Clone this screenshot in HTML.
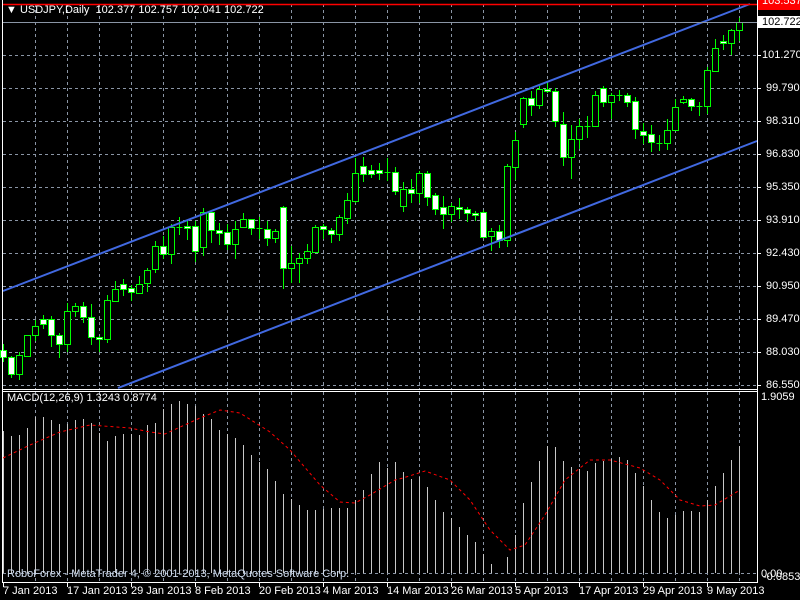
<!DOCTYPE html>
<html><head><meta charset="utf-8"><style>
html,body{margin:0;padding:0;background:#000;}
body{width:800px;height:600px;overflow:hidden;position:relative;font-family:"Liberation Sans",sans-serif;font-size:11px;color:#fff;}
svg{position:absolute;left:0;top:0;}
.t{position:absolute;white-space:nowrap;line-height:12px;}
</style></head><body>
<svg id="s" width="800" height="600" xmlns="http://www.w3.org/2000/svg"></svg>
<div class="t" style="left:6px;top:4px;">&#9660; USDJPY,Daily&nbsp; 102.377 102.757 102.041 102.722</div>
<div class="t" style="left:7px;top:568px;color:#d0ddf0;">RoboForex - MetaTrader 4, © 2001-2013, MetaQuotes Software Corp.</div>
<div class="t" style="left:7px;top:392px;">MACD(12,26,9) 1.3243 0.8774</div>
<div id="labels"></div>
<script>
var s=document.getElementById('s');var h='';
// grid
for(var x=35.5;x<757;x+=32){h+='<line x1="'+x+'" y1="4" x2="'+x+'" y2="389" stroke="#8a95a5" stroke-dasharray="3,3"/>';h+='<line x1="'+x+'" y1="392" x2="'+x+'" y2="582" stroke="#8a95a5" stroke-dasharray="3,3"/>';}
var gy=[55,88,121,154,187,220,253,286,319,352,385];
gy.forEach(function(y){h+='<line x1="3" y1="'+(y+.5)+'" x2="757" y2="'+(y+.5)+'" stroke="#8a95a5" stroke-dasharray="3,3"/><line x1="757" y1="'+(y+.5)+'" x2="761" y2="'+(y+.5)+'" stroke="#fff"/>';});
h+='<line x1="3" y1="573.5" x2="757" y2="573.5" stroke="#8a95a5" stroke-dasharray="3,3"/>';
// MACD bars
var mt=[431,436,435,428,417,417,420,424,424,420,419,423,433,441,436,434,434,435,425,423,409,404,401,404,406,414,419,430,434,438,445,455,462,469,481,494,499,505,510,510,509,508,508,508,500,490,474,462,468,462,
472,479,477,487,500,512,518,527,535,542,554,564,573,557,535,503,482,461,446,447,461,467,469,471,463,461,459,457,460,473,486,500,512,518,515,511,511,512,500,486,473,460,446];
mt.forEach(function(t,k){if(t<573)h+='<rect x="'+(3+8*k)+'" y="'+t+'" width="1" height="'+(573-t)+'" fill="#c8c8c8"/>';});
h+='<polyline fill="none" stroke="#ff0000" stroke-dasharray="3,3" points="3,458 30,445 60,432 90,425 130,428 150,432 165,434 200,418 220,410 240,413 270,432 290,450 320,485 340,502 355,503 370,495 395,480 403,478 425,471 450,480 470,500 490,530 510,550 525,545 545,515 565,480 590,460 610,460 640,468 660,480 680,500 700,506 715,505 740,490"/>';
// candles [type, bodyTop, bodyBot, wickTop, wickBot]
var c=[['D',350,357,344,362],['D',357,374,356,378],['U',355,374,352,380],['U',335,356,335,357],['U',326,335,320,341],['D',319,324,315,329],['D',319,335,316,347],['D',335,344,333,358],['U',311,344,303,352],['U',306,311,303,317],['D',306,317,302,323],['D',317,337,304,345],['D',337,339,336,352],['U',300,339,295,343],['U',289,301,281,302],['D',284,289,279,296],['D',288,292,285,301],['U',284,293,276,294],['U',270,283,268,292],['U',246,269,241,273],['D',246,254,236,259],['U',227,254,224,264],['X',227,228,217,235],['D',226,228,221,240],['D',226,251,221,262],['U',212,247,208,256],['D',212,230,212,243],['D',230,233,223,245],['D',232,244,224,250],['U',229,244,221,259],['U',219,227,213,227],['D',219,228,219,235],['X',228,229,217,239],['D',229,238,221,246],['U',231,238,229,243],['D',207,268,206,289],['U',263,268,246,283],['U',258,263,253,283],['U',251,258,244,264],['U',227,252,225,253],['D',226,229,224,239],['D',230,234,228,243],['U',217,234,215,241],['U',200,218,193,224],['U',173,201,158,203],['D',166,174,157,182],['D',170,174,165,178],['D',170,173,163,180],['X',172,173,158,181],['D',172,191,167,195],['U',189,206,182,212],['D',189,193,179,203],['U',173,193,171,203],['D',173,197,171,206],['D',195,209,193,215],['D',207,214,196,229],['U',206,214,203,222],['D',207,209,198,219],['D',209,213,207,222],['D',213,215,211,221],['D',212,237,210,238],['U',231,236,228,251],['D',231,240,225,248],['U',166,240,164,247],['U',140,167,132,180],['U',98,124,97,128],['D',98,105,91,116],['U',89,105,86,109],['D',89,91,83,93],['D',91,121,88,127],['D',124,157,112,166],['U',139,157,125,179],['U',126,139,119,149],['X',126,127,116,138],['U',95,126,91,126],['D',88,102,86,107],['U',95,102,93,119],['X',95,96,90,101],['D',95,102,93,107],['D',101,129,97,139],['D',131,135,123,144],['D',134,142,125,152],['X',143,144,135,151],['U',130,143,119,150],['U',107,130,99,130],['U',99,102,96,104],['D',99,106,98,111],['X',106,107,102,116],['U',70,106,67,114],['U',48,71,39,72],['D',41,43,35,50],['U',30,43,29,55],['U',22,30,18,41]];
c.forEach(function(d,k){var cx=3.5+8*k;
h+='<line x1="'+cx+'" y1="'+d[3]+'" x2="'+cx+'" y2="'+d[4]+'" stroke="#00ff00"/>';
if(d[0]=='X'){h+='<line x1="'+(cx-3)+'" y1="'+(d[1]+.5)+'" x2="'+(cx+3)+'" y2="'+(d[1]+.5)+'" stroke="#00ff00"/>';}
else{var bh=Math.max(2,d[2]-d[1]);h+='<rect x="'+(cx-3)+'" y="'+(d[1]+.5)+'" width="6" height="'+bh+'" fill="'+(d[0]=='D'?'#fff':'#000')+'" stroke="#00ff00"/>';}
});
// channel
h+='<line x1="3" y1="291" x2="750" y2="4" stroke="#4169e1" stroke-width="2"/>';
h+='<line x1="118" y1="388" x2="757" y2="141" stroke="#4169e1" stroke-width="2"/>';
// bid & red lines
h+='<line x1="3" y1="22.5" x2="757" y2="22.5" stroke="#8a95a5"/>';
h+='<line x1="3" y1="4.5" x2="757" y2="4.5" stroke="#ff0000" stroke-width="1.5"/>';
// borders
h+='<line x1="2.5" y1="0" x2="2.5" y2="583" stroke="#fff"/>';
h+='<line x1="757.5" y1="0" x2="757.5" y2="583" stroke="#fff"/>';
h+='<line x1="3" y1="389.5" x2="758" y2="389.5" stroke="#fff"/><line x1="3" y1="391.5" x2="758" y2="391.5" stroke="#fff"/>';
h+='<line x1="2" y1="582.5" x2="758" y2="582.5" stroke="#fff"/>';
for(var x=3.5;x<757;x+=64){h+='<line x1="'+x+'" y1="582" x2="'+x+'" y2="587" stroke="#fff"/>';}
h+='<rect x="758" y="0" width="42" height="10" fill="#ff0000"/>';
h+='<rect x="758" y="16" width="42" height="12" fill="#fff"/>';
s.innerHTML=h;
var L='';
var lab=[['101.270',55],['99.790',88],['98.310',121],['96.830',154],['95.350',187],['93.910',220],['92.430',253],['90.950',286],['89.470',319],['88.030',352],['86.550',385]];
lab.forEach(function(a){L+='<div class="t" style="left:'+(a[0].length>6?762:766)+'px;top:'+(a[1]-6)+'px;">'+a[0]+'</div>';});
L+='<div class="t" style="left:762px;top:-5px;color:#fff;">103.537</div>';
L+='<div class="t" style="left:762px;top:16px;color:#000;">102.722</div>';
L+='<div class="t" style="left:761px;top:391px;">1.9059</div>';
L+='<div class="t" style="left:761px;top:568px;">0.00</div><div class="t" style="left:763px;top:571px;">-0.0853</div>';
var dates=['7 Jan 2013','17 Jan 2013','29 Jan 2013','8 Feb 2013','20 Feb 2013','4 Mar 2013','14 Mar 2013','26 Mar 2013','5 Apr 2013','17 Apr 2013','29 Apr 2013','9 May 2013'];
dates.forEach(function(d,i){L+='<div class="t" style="left:'+(3+64*i)+'px;top:585px;">'+d+'</div>';});
document.getElementById('labels').innerHTML=L;
</script>
</body></html>
